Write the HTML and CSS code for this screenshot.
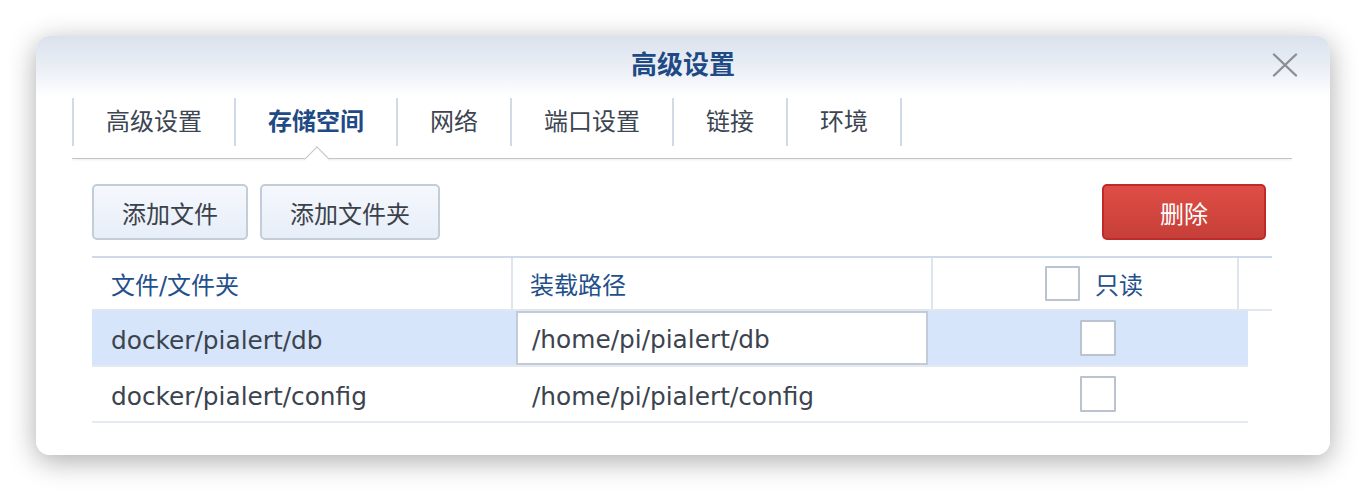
FILE: index.html
```html
<!DOCTYPE html>
<html lang="zh-CN">
<head>
<meta charset="utf-8">
<title>高级设置</title>
<link rel="stylesheet" href="styles.css">
</head>
<body>
<div class="dialog">
  <div class="titlebar">
    <span></span>
    <span class="title">高级设置</span>
    <button class="close" aria-label="关闭">
      <svg width="26" height="24" viewBox="0 0 26 24"><path d="M2 1.5 L24 22.5 M24 1.5 L2 22.5" stroke="#8b8e94" stroke-width="2.4" fill="none" stroke-linecap="round"/></svg>
    </button>
  </div>
  <div class="tabs">
    <div class="tab">高级设置</div>
    <div class="tab active">存储空间</div>
    <div class="tab">网络</div>
    <div class="tab">端口设置</div>
    <div class="tab">链接</div>
    <div class="tab last">环境</div>
  </div>
  <div class="panel">
    <div class="toolbar">
      <button class="btn btn-file">添加文件</button>
      <button class="btn btn-folder">添加文件夹</button>
      <span class="spacer"></span>
      <button class="btn btn-danger">删除</button>
    </div>
    <div class="table">
      <div class="thead">
        <div class="th c1">文件/文件夹</div>
        <div class="th c2">装载路径</div>
        <div class="th c3"><span class="check"></span><span>只读</span></div>
        <div class="th c4"></div>
      </div>
      <div class="row selected">
        <div class="td c1">docker/pialert/db</div>
        <div class="td c2"><div class="input">/home/pi/pialert/db</div></div>
        <div class="td c3r"><span class="check big"></span></div>
      </div>
      <div class="row">
        <div class="td c1">docker/pialert/config</div>
        <div class="td c2 plain">/home/pi/pialert/config</div>
        <div class="td c3r"><span class="check big"></span></div>
      </div>
    </div>
  </div>
</div>
</body>
</html>
```

FILE: styles.css
```css
* { box-sizing: border-box; }
html, body { margin: 0; padding: 0; background: #ffffff; }
body {
  font-family: "DejaVu Sans", "Noto Sans CJK SC", sans-serif;
  font-size: 24px;
  color: #3b434e;
  padding: 36px 0 0 36px;
  height: 492px;
  overflow: hidden;
}
.dialog {
  width: 1294px;
  height: 419px;
  border-radius: 14px;
  background: linear-gradient(to bottom, #dae2ed 0px, #e9eef5 30px, #fbfcfe 56px, #ffffff 62px);
  box-shadow: 0 6px 28px rgba(0,0,0,0.33);
  display: flex;
  flex-direction: column;
}
.titlebar {
  height: 62px;
  display: grid;
  grid-template-columns: 1fr auto 1fr;
  align-items: center;
  padding: 0 32px 4px 32px;
}
.title {
  font-weight: bold;
  font-size: 26px;
  color: #1f4a86;
  line-height: 30px;
}
.close {
  justify-self: end;
  border: 0;
  background: transparent;
  padding: 0;
  width: 26px;
  height: 24px;
  display: flex;
}
.tabs {
  display: flex;
  margin: 0 38px 0 36px;
  height: 61px;
  border-bottom: 1px solid #c4c4c4;
  box-shadow: 0 2px 2px -1px rgba(0,0,0,0.08);
}
.tab {
  position: relative;
  height: 48px;
  line-height: 48px;
  padding: 0 32px;
  border-left: 2px solid #d0dbe8;
  color: #3c4551;
}
.tab.last { border-right: 2px solid #d0dbe8; }
.tab.active {
  color: #1f4a86;
  font-weight: bold;
}
.tab.active::after {
  content: "";
  position: absolute;
  left: calc(50% - 8.5px);
  top: 52px;
  width: 17px;
  height: 17px;
  background: #ffffff;
  border-top: 1px solid #c4c4c4;
  border-left: 1px solid #c4c4c4;
  transform: rotate(45deg);
}
.panel {
  padding: 25px 58px 0 56px;
}
.toolbar {
  display: flex;
  gap: 12px;
  padding-right: 6px;
  height: 56px;
}
.spacer { flex: 1; }
.btn {
  font-family: inherit;
  font-size: 24px;
  height: 56px;
  border-radius: 5px;
  border: 2px solid #c3ccd9;
  background: linear-gradient(to bottom, #f5f8fd, #e7eef8);
  color: #3b414b;
  padding: 0;
}
.btn-file { width: 156px; }
.btn-folder { width: 180px; }
.btn-danger {
  width: 164px;
  border-color: #bf2a2b;
  background: linear-gradient(to bottom, #de4e46, #c63f38);
  color: #ffffff;
}
.table {
  margin-top: 16px;
}
.thead {
  display: flex;
  height: 55px;
  border-top: 2px solid #cfdae8;
  border-bottom: 2px solid #e0e7f0;
}
.th {
  display: flex;
  align-items: center;
  color: #23508b;
  border-right: 2px solid #dde5ef;
}
.th.c1 { width: 421px; padding-left: 19px; }
.th.c2 { width: 420px; padding-left: 17px; }
.th.c3 { width: 306px; padding-left: 112px; gap: 15px; }
.th.c4 { width: 33px; border-right: 0; }
.row {
  display: flex;
  width: 1156px;
  height: 56px;
  border-bottom: 2px solid #e5eaf2;
  align-items: center;
}
.row.selected { background: #d6e5f9; }
.td { font-size: 24.8px; }
.td.c1 { width: 421px; padding-left: 19px; padding-top: 4px; }
.td.c2 { width: 420px; padding-left: 3px; }
.td.c2.plain { padding-left: 19px; padding-top: 4px; }
.td.c3r { width: 315px; padding-left: 147px; display: flex; }
.input {
  width: 412px;
  height: 54px;
  background: #ffffff;
  border: 2px solid #c2ccd9;
  padding: 4px 0 0 14px;
  line-height: 46px;
}
.check {
  display: inline-block;
  width: 35px;
  height: 35px;
  border: 2px solid #bac4d1;
  background: #ffffff;
  border-radius: 1px;
}
.check.big { width: 36px; height: 36px; }
```
